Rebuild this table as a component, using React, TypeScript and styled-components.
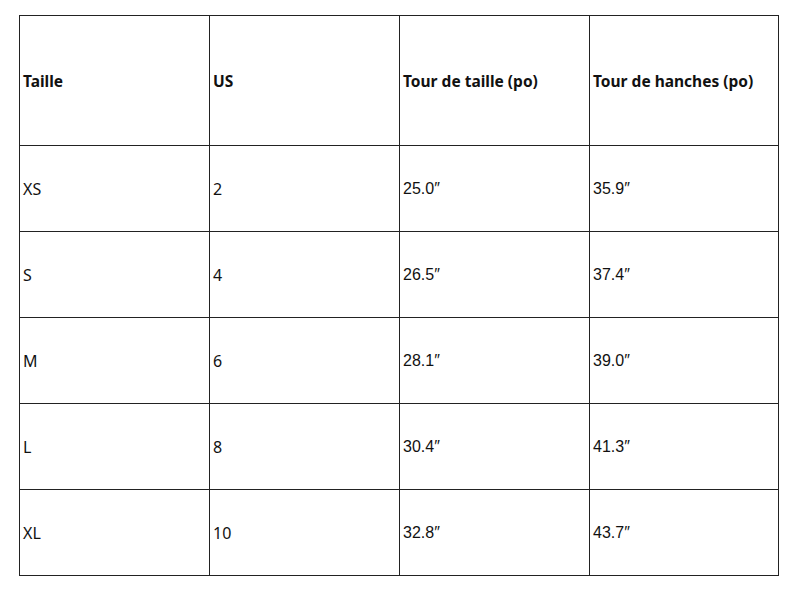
import React from "react";
import styled, { createGlobalStyle } from "styled-components";

const GlobalStyle = createGlobalStyle`
  html, body {
    margin: 0;
    padding: 0;
    background: #ffffff;
  }
`;

const rows = [
  ["XS", "2", "25.0″", "35.9″"],
  ["S", "4", "26.5″", "37.4″"],
  ["M", "6", "28.1″", "39.0″"],
  ["L", "8", "30.4″", "41.3″"],
  ["XL", "10", "32.8″", "43.7″"],
];

const headers = ["Taille", "US", "Tour de taille (po)", "Tour de hanches (po)"];

function App() {
  return (
    <>
      <GlobalStyle />
      <Page>
        <SizeTable>
          <thead>
            <tr>
              {headers.map((h) => (
                <HeadCell key={h}>{h}</HeadCell>
              ))}
            </tr>
          </thead>
          <tbody>
            {rows.map((r) => (
              <tr key={r[0]}>
                {r.map((c, i) => (
                  <Cell key={i} $numeric={i >= 2}>
                    {c}
                  </Cell>
                ))}
              </tr>
            ))}
          </tbody>
        </SizeTable>
      </Page>
    </>
  );
}
export default App;

const Page = styled.div`
  width: 800px;
  height: 600px;
  padding: 15px 0 0 19px;
  box-sizing: border-box;
`;
const SizeTable = styled.table`
  border-collapse: collapse;
  table-layout: fixed;
  width: 760px;
  color: #111;
`;
const HeadCell = styled.th`
  width: 190px;
  height: 130px;
  border: 1px solid #222;
  padding: 0 0 0 3px;
  text-align: left;
  vertical-align: middle;
  font-family: "Noto Sans", "Open Sans", sans-serif;
  font-weight: 700;
  font-size: 15.5px;
  box-sizing: border-box;
  &:last-child {
    width: 189px;
  }
`;
const Cell = styled.td<{ $numeric?: boolean }>`
  height: 86px;
  border: 1px solid #222;
  padding: 0 0 0 3px;
  vertical-align: middle;
  font-family: ${(p) =>
    p.$numeric ? `"Liberation Sans", Arial, sans-serif` : `"Noto Sans", "Open Sans", sans-serif`};
  font-size: 16px;
  box-sizing: border-box;
`;
